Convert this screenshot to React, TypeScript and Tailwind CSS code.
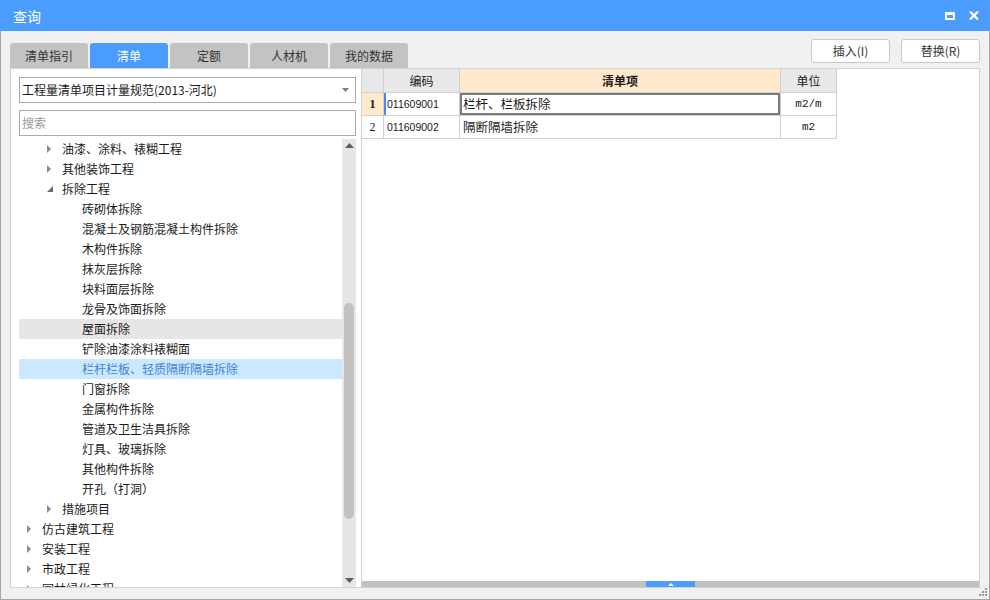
import React from "react";

type Node = { l: number; t: string; a?: "r" | "d"; hover?: boolean; sel?: boolean };

const tree: Node[] = [
  { l: 1, t: "油漆、涂料、裱糊工程", a: "r" },
  { l: 1, t: "其他装饰工程", a: "r" },
  { l: 1, t: "拆除工程", a: "d" },
  { l: 2, t: "砖砌体拆除" },
  { l: 2, t: "混凝土及钢筋混凝土构件拆除" },
  { l: 2, t: "木构件拆除" },
  { l: 2, t: "抹灰层拆除" },
  { l: 2, t: "块料面层拆除" },
  { l: 2, t: "龙骨及饰面拆除" },
  { l: 2, t: "屋面拆除", hover: true },
  { l: 2, t: "铲除油漆涂料裱糊面" },
  { l: 2, t: "栏杆栏板、轻质隔断隔墙拆除", sel: true },
  { l: 2, t: "门窗拆除" },
  { l: 2, t: "金属构件拆除" },
  { l: 2, t: "管道及卫生洁具拆除" },
  { l: 2, t: "灯具、玻璃拆除" },
  { l: 2, t: "其他构件拆除" },
  { l: 2, t: "开孔（打洞）" },
  { l: 1, t: "措施项目", a: "r" },
  { l: 0, t: "仿古建筑工程", a: "r" },
  { l: 0, t: "安装工程", a: "r" },
  { l: 0, t: "市政工程", a: "r" },
  { l: 0, t: "园林绿化工程", a: "r" },
];

const indent = ["pl-[8px]", "pl-[28px]", "pl-[48px]"];

const tabs = ["清单指引", "清单", "定额", "人材机", "我的数据"];

const rows = [
  { n: "1", code: "011609001", name: "栏杆、栏板拆除", unit: "m2/m", active: true },
  { n: "2", code: "011609002", name: "隔断隔墙拆除", unit: "m2", active: false },
];

const Arrow = ({ a }: { a?: "r" | "d" }) => (
  <span className="w-[15px] h-[20px] flex items-center shrink-0">
    {a === "r" && (
      <svg width="4" height="8" viewBox="0 0 4 8">
        <polygon points="0,0 4,4 0,8" fill="#8a8a8a" />
      </svg>
    )}
    {a === "d" && (
      <svg width="6" height="6" viewBox="0 0 6 6">
        <polygon points="6,0 6,6 0,6" fill="#6b6b6b" />
      </svg>
    )}
  </span>
);

export default function App() {
  return (
    <div className="relative w-[990px] h-[600px] flex flex-col bg-[#f0f0f0] text-[#1a1a1a] font-['Noto_Sans_CJK_SC',sans-serif] overflow-hidden">
      {/* title bar */}
      <div className="h-[31px] shrink-0 bg-[#4b9cff] flex items-center pl-[13px] pr-[11px]">
        <span className="text-white text-[14px] leading-none">查询</span>
        <div className="ml-auto flex items-center gap-[14px]">
          <span className="w-[10px] h-[8px] border-2 border-white border-t-[3px]" />
          <svg width="10" height="9" viewBox="0 0 10 9">
            <path d="M1 0.5 L9 8.5 M9 0.5 L1 8.5" stroke="#fff" strokeWidth="2.2" />
          </svg>
        </div>
      </div>

      <div className="flex-1 min-h-0 flex flex-col border-x border-b border-[#a6a6a6] px-[9px] pb-[11px]">
        {/* tabs + buttons */}
        <div className="h-[37px] shrink-0 flex">
          <div className="flex gap-[2px] self-end">
            {tabs.map((t, i) => (
              <div
                key={t}
                className={
                  i === 1
                    ? "w-[78px] h-[25px] rounded-t-[3px] bg-[#4b9cff] text-white flex items-center justify-center text-[12px] leading-none"
                    : "w-[78px] h-[25px] rounded-t-[3px] bg-[#c3c3c3] text-[#333] flex items-center justify-center text-[12px] leading-none"
                }
              >
                {t}
              </div>
            ))}
          </div>
          <div className="ml-auto mt-[8px] flex gap-[11px]">
            <button className="w-[79px] h-[24px] bg-white border border-[#c8c8c8] rounded-[3px] text-[12px] leading-none text-[#333]">
              插入(I)
            </button>
            <button className="w-[79px] h-[24px] bg-white border border-[#c8c8c8] rounded-[3px] text-[12px] leading-none text-[#333]">
              替换(R)
            </button>
          </div>
        </div>

        {/* content */}
        <div className="flex-1 flex min-h-0">
          {/* left panel */}
          <div className="w-[352px] shrink-0 min-h-0 bg-white border border-[#d2d2d2] flex flex-col pl-[8px] pr-[5px] pt-[8px]">
            <div className="h-[26px] shrink-0 border border-[#a9a9a9] flex items-center pl-[2px] pr-[6px] text-[12px] leading-none">
              <span>工程量清单项目计量规范(2013-河北)</span>
              <svg className="ml-auto" width="7" height="4" viewBox="0 0 7 4">
                <polygon points="0,0 7,0 3.5,4" fill="#7d7d7d" />
              </svg>
            </div>
            <div className="h-[26px] mt-[7px] shrink-0 border border-[#a9a9a9] flex items-center pl-[2px] text-[12px] leading-none text-[#9a9a9a]">
              搜索
            </div>
            <div className="flex-1 mt-[3px] flex min-h-0">
              <div className="flex-1 overflow-hidden">
                {tree.map((n, i) => (
                  <div
                    key={i}
                    className={[
                      "h-[20px] flex items-center text-[12px] leading-none whitespace-nowrap",
                      indent[n.l],
                      n.sel ? "bg-[#cce8ff] text-[#3d83e0]" : n.hover ? "bg-[#e6e6e6]" : "",
                    ].join(" ")}
                  >
                    <Arrow a={n.a} />
                    <span>{n.t}</span>
                  </div>
                ))}
              </div>
              <div className="w-[14px] shrink-0 bg-[#e6e6e6] flex flex-col items-center overflow-hidden">
                <svg className="mt-[4px] shrink-0" width="9" height="5" viewBox="0 0 9 5">
                  <polygon points="0,5 9,5 4.5,0" fill="#606060" />
                </svg>
                <div className="h-[155px] shrink-0" />
                <div className="w-[10px] h-[216px] shrink-0 rounded-full bg-[#c1c1c1]" />
                <div className="flex-1" />
                <svg className="mb-[4px] shrink-0" width="9" height="5" viewBox="0 0 9 5">
                  <polygon points="0,0 9,0 4.5,5" fill="#606060" />
                </svg>
              </div>
            </div>
          </div>

          {/* right panel */}
          <div className="flex-1 bg-white border-y border-r border-[#d2d2d2] flex flex-col">
            <div className="flex-1 text-[12px]">
              <div className="w-fit">
                <div className="flex h-[24px] border-b border-[#d0d0d0]">
                  <div className="w-[22px] bg-[#e8e8e8] border-r border-[#d0d0d0]" />
                  <div className="w-[76px] bg-[#e8e8e8] border-r border-[#d0d0d0] flex items-center justify-center leading-none">编码</div>
                  <div className="w-[321px] bg-[#ffe8cc] border-r border-[#d0d0d0] flex items-center justify-center leading-none font-bold">清单项</div>
                  <div className="w-[56px] bg-[#e8e8e8] border-r border-[#d0d0d0] flex items-center justify-center leading-none">单位</div>
                </div>
                {rows.map((r) => (
                  <div key={r.n} className="flex h-[23px] border-b border-[#d0d0d0]">
                    <div
                      className={
                        r.active
                          ? "w-[22px] bg-[#ffe8cc] border-r border-[#d0d0d0] flex items-center justify-center font-['Liberation_Serif',serif] font-bold text-[12px] leading-none"
                          : "w-[22px] border-r border-[#d0d0d0] flex items-center justify-center font-['Liberation_Serif',serif] text-[12px] leading-none"
                      }
                    >
                      {r.n}
                    </div>
                    <div
                      className={
                        r.active
                          ? "w-[76px] border-r border-[#d0d0d0] border-l-2 border-l-[#3c8cff] flex items-center pl-[1px] font-['Liberation_Sans',sans-serif] text-[10.5px] leading-none"
                          : "w-[76px] border-r border-[#d0d0d0] flex items-center pl-[3px] font-['Liberation_Sans',sans-serif] text-[10.5px] leading-none"
                      }
                    >
                      {r.code}
                    </div>
                    <div
                      className={
                        r.active
                          ? "w-[321px] border-r border-[#d0d0d0] flex items-center pl-[3px] text-[12.5px] leading-none shadow-[inset_0_0_0_2px_#7a7a7a,inset_0_1px_0_#4b9cff]"
                          : "w-[321px] border-r border-[#d0d0d0] flex items-center pl-[3px] text-[12.5px] leading-none"
                      }
                    >
                      {r.name}
                    </div>
                    <div className="w-[56px] border-r border-[#d0d0d0] flex items-center justify-center font-['Liberation_Mono',monospace] text-[11px] leading-none">
                      {r.unit}
                    </div>
                  </div>
                ))}
              </div>
            </div>
            <div className="h-[6px] shrink-0 bg-[#c1c1c1] flex">
              <div className="w-[284px]" />
              <div className="w-[49px] bg-[#4b9cff] flex items-center justify-center">
                <svg width="6" height="3" viewBox="0 0 6 3">
                  <polygon points="0,3 6,3 3,0" fill="#fff" />
                </svg>
              </div>
            </div>
          </div>
        </div>
      </div>

      {/* resize grip */}
      <div className="absolute right-[3px] bottom-[4px] grid grid-cols-3 gap-[1px]">
        <span className="w-[2px] h-[2px]" />
        <span className="w-[2px] h-[2px]" />
        <span className="w-[2px] h-[2px] bg-[#9a9a9a]" />
        <span className="w-[2px] h-[2px]" />
        <span className="w-[2px] h-[2px] bg-[#9a9a9a]" />
        <span className="w-[2px] h-[2px] bg-[#9a9a9a]" />
        <span className="w-[2px] h-[2px] bg-[#9a9a9a]" />
        <span className="w-[2px] h-[2px] bg-[#9a9a9a]" />
        <span className="w-[2px] h-[2px] bg-[#9a9a9a]" />
      </div>
    </div>
  );
}
